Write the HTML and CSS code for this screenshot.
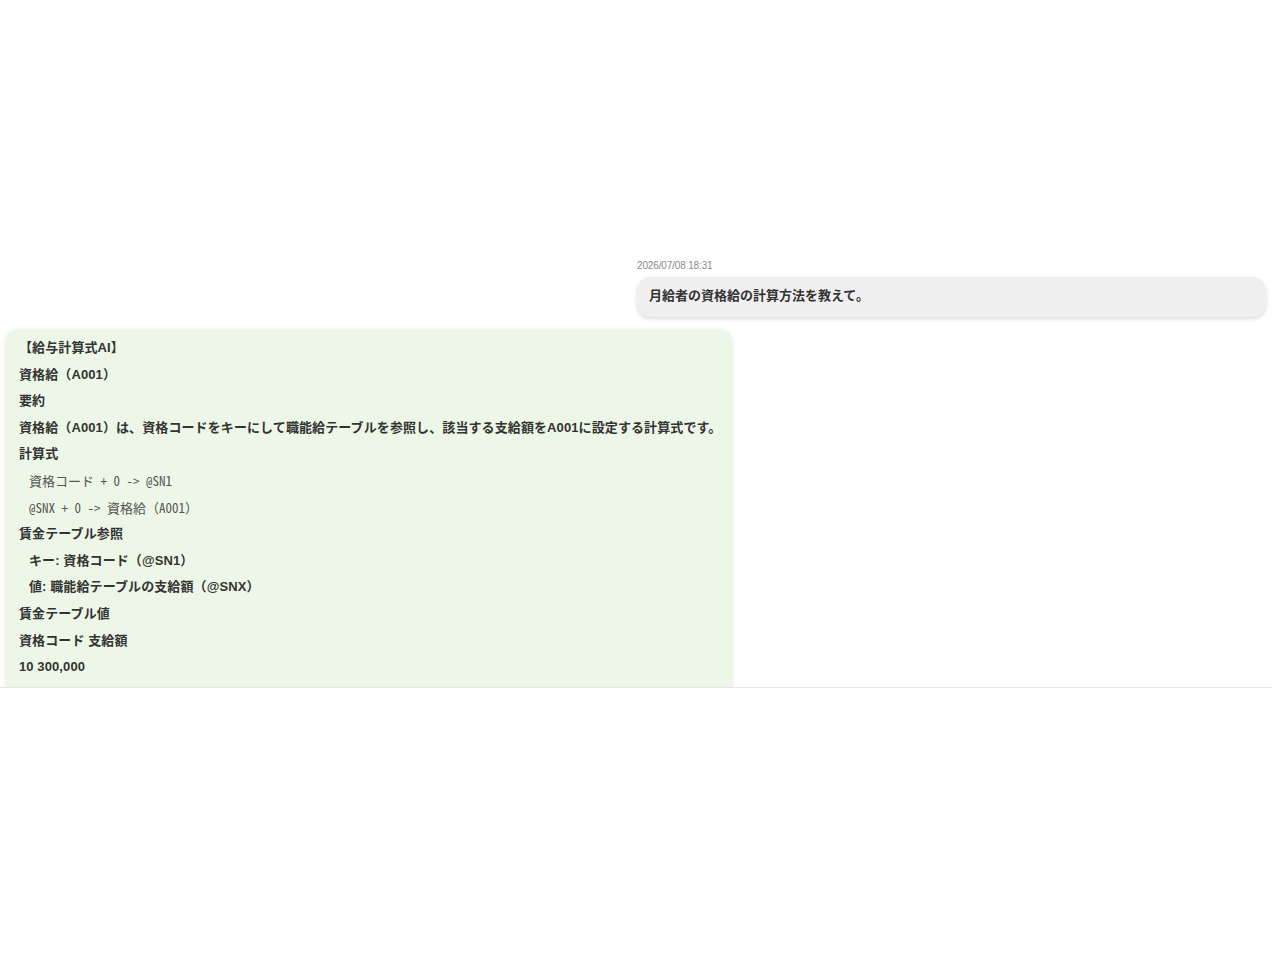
FILE: index.html
```html
<!DOCTYPE html>
<html lang="ja">
<head>
<meta charset="utf-8">
<title>給与計算式AI</title>
<link rel="stylesheet" href="styles.css">
</head>
<body>
<main class="chat">
  <section class="msg msg-user">
    <div class="msg-time">2026/07/08 18:31</div>
    <div class="bubble bubble-user">月給者の資格給の計算方法を教えて。</div>
  </section>
  <section class="msg msg-ai">
    <div class="bubble bubble-ai">
      <div class="line">【給与計算式AI】</div>
      <div class="line">資格給（A001）</div>
      <div class="line">要約</div>
      <div class="line">資格給（A001）は、資格コードをキーにして職能給テーブルを参照し、該当する支給額をA001に設定する計算式です。</div>
      <div class="line">計算式</div>
      <div class="line code">資格コード + 0 -&gt; @SN1</div>
      <div class="line code">@SNX + 0 -&gt; 資格給（A001）</div>
      <div class="line">賃金テーブル参照</div>
      <div class="line indent">キー: 資格コード（@SN1）</div>
      <div class="line indent">値: 職能給テーブルの支給額（@SNX）</div>
      <div class="line">賃金テーブル値</div>
      <div class="line">資格コード 支給額</div>
      <div class="line">10 300,000</div>
    </div>
  </section>
</main>
<footer class="composer"></footer>
</body>
</html>
```

FILE: styles.css
```css
html, body {
  margin: 0;
  padding: 0;
  background: #ffffff;
}

body {
  font-family: "Liberation Sans", "Noto Sans CJK JP", sans-serif;
  color: #333333;
}

.chat {
  height: 688px;
  box-sizing: border-box;
  overflow: hidden;
  padding: 260px 6px 0;
  border-bottom: 1px solid #e6e6e6;
  display: flex;
  flex-direction: column;
}

.msg-user {
  align-self: flex-end;
  width: 629px;
}

.msg-time {
  font-size: 10px;
  line-height: 12px;
  letter-spacing: -0.15px;
  color: #8a8a8a;
  margin-bottom: 5px;
}

.bubble {
  font-size: 13px;
  font-weight: bold;
  color: #333333;
}

.bubble-user {
  background: #f0f0f0;
  border-radius: 14px;
  padding: 9px 12px 11px;
  line-height: 20px;
  box-shadow: 0 2px 4px rgba(0, 0, 0, 0.14);
}

.msg-ai {
  margin-top: 12px;
  align-self: flex-start;
}

.bubble-ai {
  background: #edf7e7;
  border-radius: 13px;
  padding: 6px 11px 14px 13px;
  letter-spacing: 0.1px;
  box-shadow: 0 1px 4px rgba(0, 0, 0, 0.12);
}

.line {
  line-height: 26.6px;
  white-space: nowrap;
}

.indent {
  padding-left: 10px;
}

.code {
  padding-left: 10px;
  font-family: "Noto Sans Mono CJK JP", "Noto Sans CJK JP", monospace;
  font-weight: normal;
  letter-spacing: 0;
  color: #555555;
}

.composer {
  height: 265px;
  background: #ffffff;
}
```
